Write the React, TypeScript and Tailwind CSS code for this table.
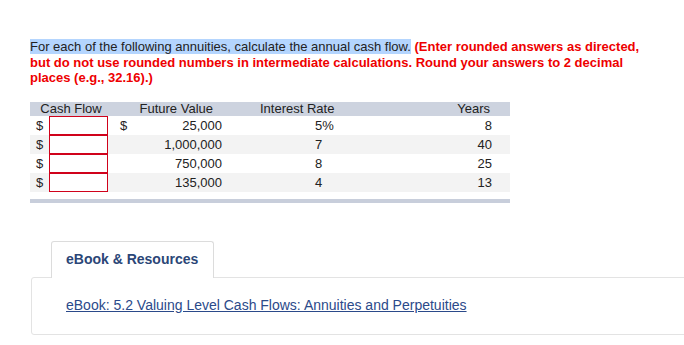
import React from "react";

const ROWS = [
  { fv: "25,000", rate: "5%", years: "8", dollar: true },
  { fv: "1,000,000", rate: "7", years: "40", dollar: false },
  { fv: "750,000", rate: "8", years: "25", dollar: false },
  { fv: "135,000", rate: "4", years: "13", dollar: false },
];

export default function App() {
  return (
    <div className="w-[684px] h-[345px] overflow-hidden bg-white text-[13px] text-[#222] font-['Liberation_Sans',Arial,sans-serif]">
      <div className="pl-[30px] pt-[39px] pr-[40px] leading-[15.5px]">
        <p>
          <span className="bg-[#b4d5fe]">For each of the following annuities, calculate the annual cash flow.</span>{" "}
          <b className="text-[#ee0000]">
            (Enter rounded answers as directed, but do not use rounded numbers in intermediate calculations. Round your answers to 2 decimal places (e.g., 32.16).)
          </b>
        </p>
      </div>

      {/* table */}
      <div className="ml-[30px] mt-[16px] w-[480px]">
        <div className="grid grid-cols-[82px_118px_210px_70px] h-[14px] bg-[#cdd3df] items-center leading-none">
          <div className="text-center">Cash Flow</div>
          <div className="text-right pr-[17px]">Future Value</div>
          <div className="pl-[30px]">Interest Rate</div>
          <div className="text-right pr-[20px]">Years</div>
        </div>
        {ROWS.map((r, i) => (
          <div
            key={i}
            className={`grid grid-cols-[82px_118px_210px_70px] h-[19px] items-center ${i % 2 === 1 ? "bg-[#f3f3f3]" : "bg-white"}`}
          >
            <div className="flex items-center pl-[6px] gap-[6px]">
              <span>$</span>
              <input className="w-[59px] h-[19px] border border-[#d0021b] bg-white outline-none" />
            </div>
            <div className="flex justify-between pl-[8px] pr-[8px]">
              <span>{r.dollar ? "$" : ""}</span>
              <span>{r.fv}</span>
            </div>
            <div className="pl-[85px]">{r.rate}</div>
            <div className="text-right pr-[18px]">{r.years}</div>
          </div>
        ))}
        <div className="mt-[7px] h-[4px] bg-[#c8cedb]" />
      </div>

      {/* resources */}
      <div className="ml-[31px] mt-[38px] text-[14px]">
        <div className="ml-[20px] w-[163px] h-[37px] border border-b-0 border-[#dcdcdc] rounded-t-[3px] bg-white flex items-center pl-[14px] relative z-10 -mb-px">
          <span className="font-bold text-[#2b4677]">eBook &amp; Resources</span>
        </div>
        <div className="w-[700px] h-[58px] border border-[#e3e3e3] rounded-[3px] flex items-center pl-[34px]">
          <a href="#" className="text-[#2b4a8a] underline">
            eBook: 5.2 Valuing Level Cash Flows: Annuities and Perpetuities
          </a>
        </div>
      </div>
    </div>
  );
}
